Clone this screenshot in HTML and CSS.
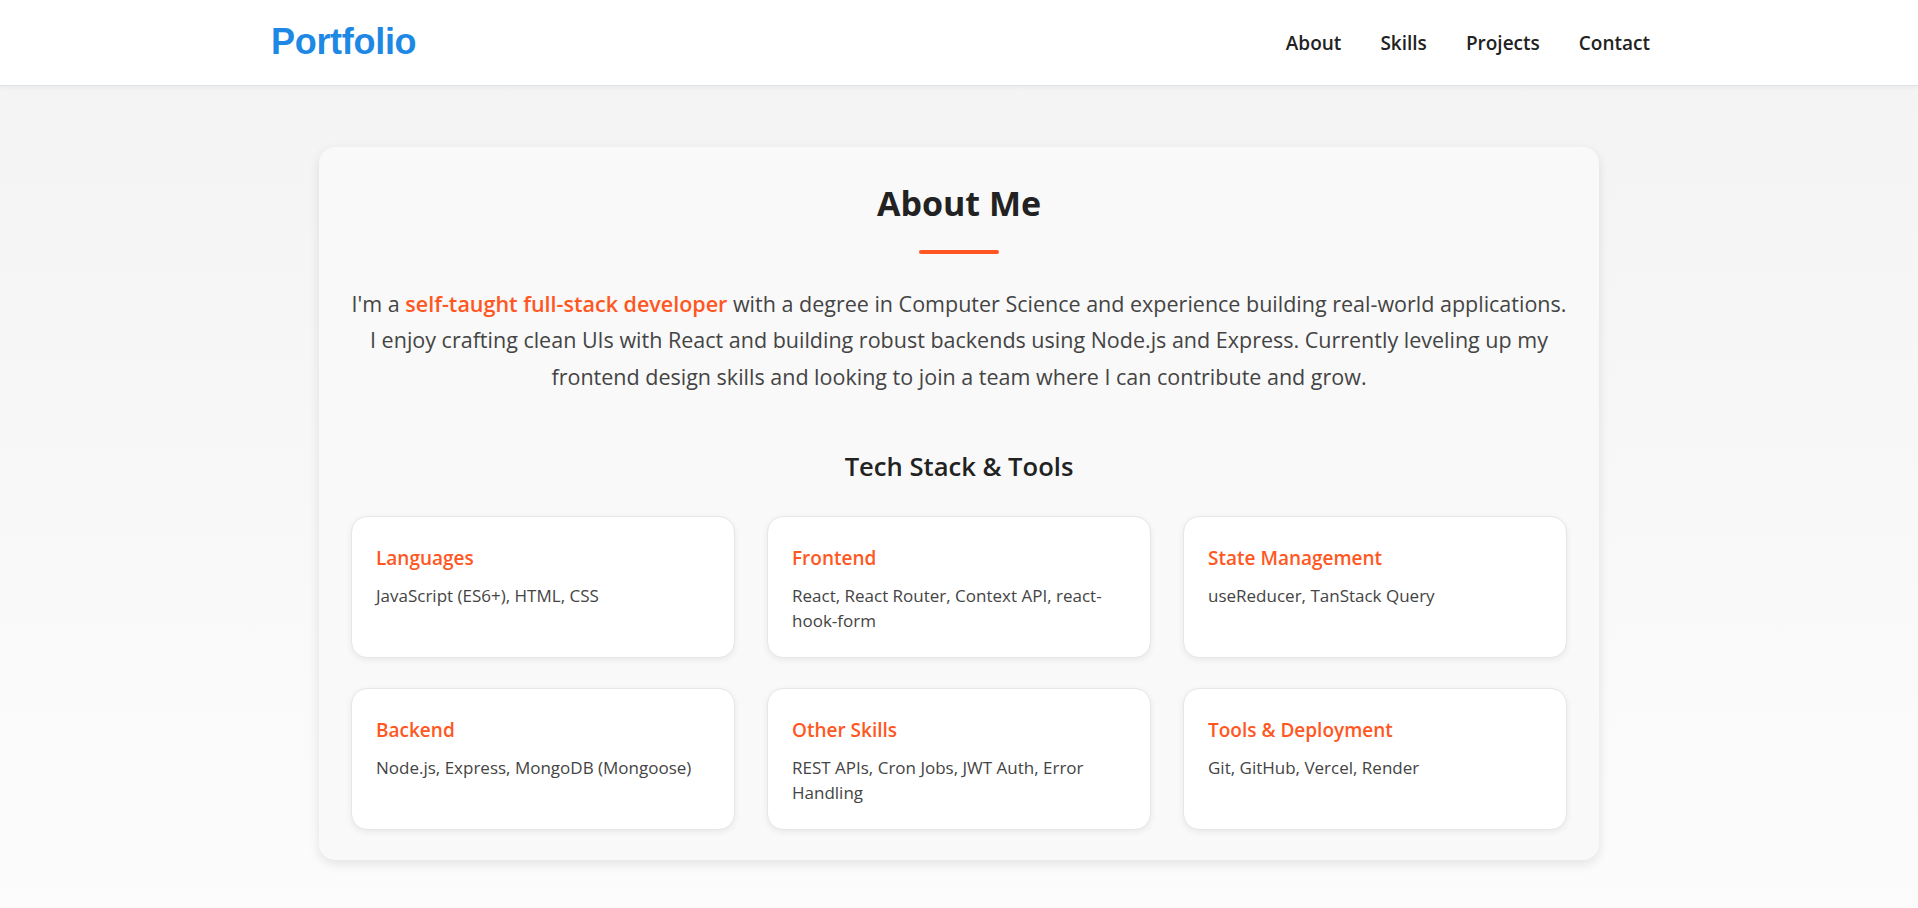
FILE: index.html
```html
<!DOCTYPE html>
<html lang="en">
<head>
<meta charset="utf-8">
<title>Portfolio</title>
<link rel="stylesheet" href="styles.css">
</head>
<body>
<header class="site-header">
  <div class="header-inner">
    <a class="logo" href="#">Portfolio</a>
    <nav class="nav">
      <a href="#about">About</a>
      <a href="#skills">Skills</a>
      <a href="#projects">Projects</a>
      <a href="#contact">Contact</a>
    </nav>
  </div>
</header>
<main class="main">
  <section class="about" id="about">
    <h2 class="about-title">About Me</h2>
    <div class="title-bar"></div>
    <p class="about-text">I'm a <span class="highlight">self-taught full-stack developer</span> with a degree in Computer Science and experience building real-world applications. I enjoy crafting clean UIs with React and building robust backends using Node.js and Express. Currently leveling up my frontend design skills and looking to join a team where I can contribute and grow.</p>
    <h3 class="stack-title">Tech Stack &amp; Tools</h3>
    <div class="stack-grid">
      <div class="stack-card">
        <h4>Languages</h4>
        <p>JavaScript (ES6+), HTML, CSS</p>
      </div>
      <div class="stack-card">
        <h4>Frontend</h4>
        <p>React, React Router, Context API, react-hook-form</p>
      </div>
      <div class="stack-card">
        <h4>State Management</h4>
        <p>useReducer, TanStack Query</p>
      </div>
      <div class="stack-card">
        <h4>Backend</h4>
        <p>Node.js, Express, MongoDB (Mongoose)</p>
      </div>
      <div class="stack-card">
        <h4>Other Skills</h4>
        <p>REST APIs, Cron Jobs, JWT Auth, Error Handling</p>
      </div>
      <div class="stack-card">
        <h4>Tools &amp; Deployment</h4>
        <p>Git, GitHub, Vercel, Render</p>
      </div>
    </div>
  </section>
</main>
</body>
</html>
```
FILE: styles.css
```css
* { box-sizing: border-box; }

html, body { height: 100%; }

body {
  margin: 0;
  font-family: "Open Sans", "Noto Sans", sans-serif;
  color: #222;
  background: linear-gradient(to bottom, #f3f3f3 0%, #fcfcfc 100%);
  min-height: 908px;
}

.site-header {
  height: 85px;
  background: #fff;
  box-shadow: 0 1px 0 #dde3ea, 0 2px 6px rgba(0, 0, 0, 0.05);
  position: relative;
  z-index: 1;
}

.header-inner {
  width: 1380px;
  margin: 0 auto;
  height: 100%;
  display: flex;
  align-items: center;
  justify-content: space-between;
}

.logo {
  font-family: "Liberation Sans", Arial, sans-serif;
  font-weight: 700;
  font-size: 36px;
  color: #1e88e5;
  text-decoration: none;
  letter-spacing: -0.3px;
  margin: -2px 0 0 2px;
}

.nav {
  display: flex;
  gap: 39px;
  margin: 1px -1px 0 0;
}

.nav a {
  font-size: 19px;
  font-weight: 600;
  color: #222;
  text-decoration: none;
}

.main {
  padding: 62px 0 40px;
}

.about {
  width: 1280px;
  margin: 0 auto;
  background: #f9f9f9;
  border-radius: 16px;
  box-shadow: 0 4px 12px rgba(0, 0, 0, 0.1);
  padding: 36px 32px 30px;
  text-align: center;
}

.about-title {
  margin: 0;
  font-size: 34px;
  line-height: 1.2;
  font-weight: 700;
  color: #222;
}

.title-bar {
  width: 80px;
  height: 4px;
  border-radius: 2px;
  background: #ff5722;
  margin: 26px auto 32px;
}

.about-text {
  margin: 0;
  font-size: 21.5px;
  line-height: 36.6px;
  color: #444;
}

.highlight {
  color: #ff5722;
  font-weight: 600;
}

.stack-title {
  margin: 56px 0 34px;
  font-size: 25.6px;
  line-height: 1.2;
  font-weight: 600;
  color: #222;
}

.stack-grid {
  display: grid;
  grid-template-columns: repeat(3, 1fr);
  gap: 30px 32px;
  text-align: left;
}

.stack-card {
  background: #fff;
  border: 1px solid #e6e6e6;
  border-radius: 16px;
  box-shadow: 0 2px 6px rgba(0, 0, 0, 0.07);
  padding: 29px 24px 24px;
}

.stack-card h4 {
  margin: 0 0 12px;
  font-size: 19px;
  line-height: 1.3;
  font-weight: 600;
  color: #ff5722;
}

.stack-card p {
  margin: 0;
  font-size: 17px;
  line-height: 25px;
  color: #444;
}
```
